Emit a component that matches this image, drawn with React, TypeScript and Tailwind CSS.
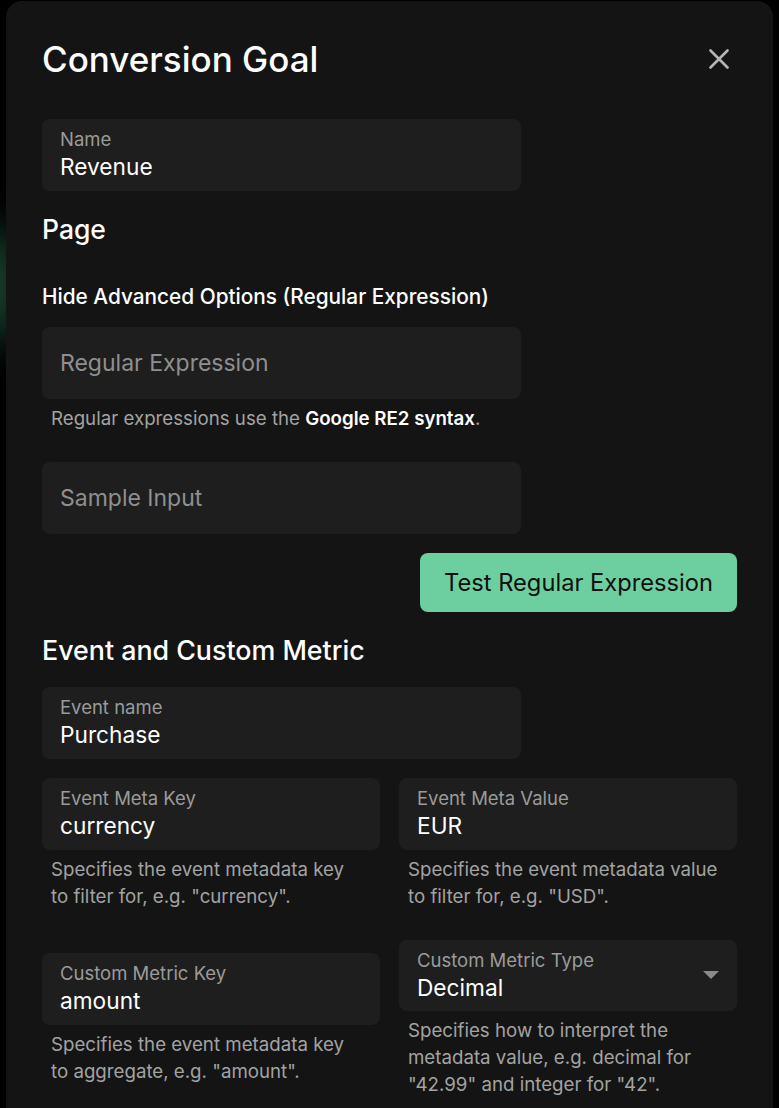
type FieldProps = {
  label: string;
  value: string;
  className?: string;
};

function Field({ label, value, className = "" }: FieldProps) {
  return (
    <div className={`h-[72px] rounded-lg bg-[#1e1e1e] px-[18px] pt-[8px] ${className}`}>
      <p className="text-[18.5px] leading-[24px] text-[#9b9b9b]">{label}</p>
      <p className="text-[22.7px] leading-[32px] text-white">{value}</p>
    </div>
  );
}

function Placeholder({ text }: { text: string }) {
  return (
    <div className="flex h-[72px] w-[479px] items-center rounded-lg bg-[#1e1e1e] px-[18px]">
      <span className="text-[23px] text-[#8f8f8f]">{text}</span>
    </div>
  );
}

function Help({ children, className = "" }: { children: React.ReactNode; className?: string }) {
  return (
    <p className={`mt-[6px] pl-[9px] pr-[14px] text-[18.7px] leading-[27px] text-[#a3a3a3] ${className}`}>
      {children}
    </p>
  );
}

export default function App() {
  return (
    <div className="relative h-[1108px] overflow-hidden bg-black font-['Inter',sans-serif]">
      <div className="absolute left-[-40px] top-[230px] h-[110px] w-[60px] rounded-full bg-[#1d4a35] blur-xl" />
      <div className="relative ml-[6px] mr-[6px] mt-[1px] h-[1200px] rounded-2xl bg-[#141414] px-[36px] pt-[38px]">
        <div className="flex items-center justify-between">
          <h1 className="text-[35px] leading-[40px] font-medium text-white">Conversion Goal</h1>
          <svg width="20" height="20" viewBox="0 0 20 20" className="mr-[8px]">
            <path d="M1.5 1.5 L18.5 18.5 M18.5 1.5 L1.5 18.5" stroke="#b5b5b5" strokeWidth="2.6" strokeLinecap="round" />
          </svg>
        </div>

        <Field label="Name" value="Revenue" className="mt-[40px] w-[479px]" />

        <h2 className="mt-[22px] text-[26.5px] leading-[32px] font-medium text-white">Page</h2>
        <p className="mt-[38px] text-[20.8px] leading-[28px] font-medium text-white">
          Hide Advanced Options (Regular Expression)
        </p>

        <div className="mt-[16px]">
          <Placeholder text="Regular Expression" />
          <Help>
            Regular expressions use the <span className="font-semibold text-white">Google RE2 syntax</span>.
          </Help>
        </div>

        <div className="mt-[30px]">
          <Placeholder text="Sample Input" />
        </div>

        <div className="mt-[19px] flex justify-end">
          <button className="h-[59px] w-[317px] rounded-lg bg-[#6dcf9f] text-[23.7px] text-[#101010]">
            Test Regular Expression
          </button>
        </div>

        <h2 className="mt-[22px] text-[26.8px] leading-[32px] font-medium text-white">Event and Custom Metric</h2>

        <Field label="Event name" value="Purchase" className="mt-[21px] w-[479px]" />

        <div className="mt-[19px] grid grid-cols-2 gap-x-[19px]">
          <div>
            <Field label="Event Meta Key" value="currency" />
            <Help>Specifies the event metadata key to filter for, e.g. "currency".</Help>
          </div>
          <div>
            <Field label="Event Meta Value" value="EUR" />
            <Help>Specifies the event metadata value to filter for, e.g. "USD".</Help>
          </div>
        </div>

        <div className="mt-[30px] grid grid-cols-2 gap-x-[19px]">
          <div className="pt-[13px]">
            <Field label="Custom Metric Key" value="amount" />
            <Help>Specifies the event metadata key to aggregate, e.g. "amount".</Help>
          </div>
          <div>
            <div className="flex h-[71px] items-center justify-between rounded-lg bg-[#1e1e1e] pl-[18px] pr-[18px]">
              <div className="self-start pt-[8px]">
                <p className="text-[18.5px] leading-[24px] text-[#9b9b9b]">Custom Metric Type</p>
                <p className="text-[22.7px] leading-[32px] text-white">Decimal</p>
              </div>
              <svg width="16" height="8" viewBox="0 0 16 8" className="mb-[2px]">
                <path d="M0 0 L16 0 L8 8 Z" fill="#8a8a8a" />
              </svg>
            </div>
            <Help>
              Specifies how to interpret the metadata value, e.g. decimal for "42.99" and integer for "42".
            </Help>
          </div>
        </div>
      </div>
    </div>
  );
}
